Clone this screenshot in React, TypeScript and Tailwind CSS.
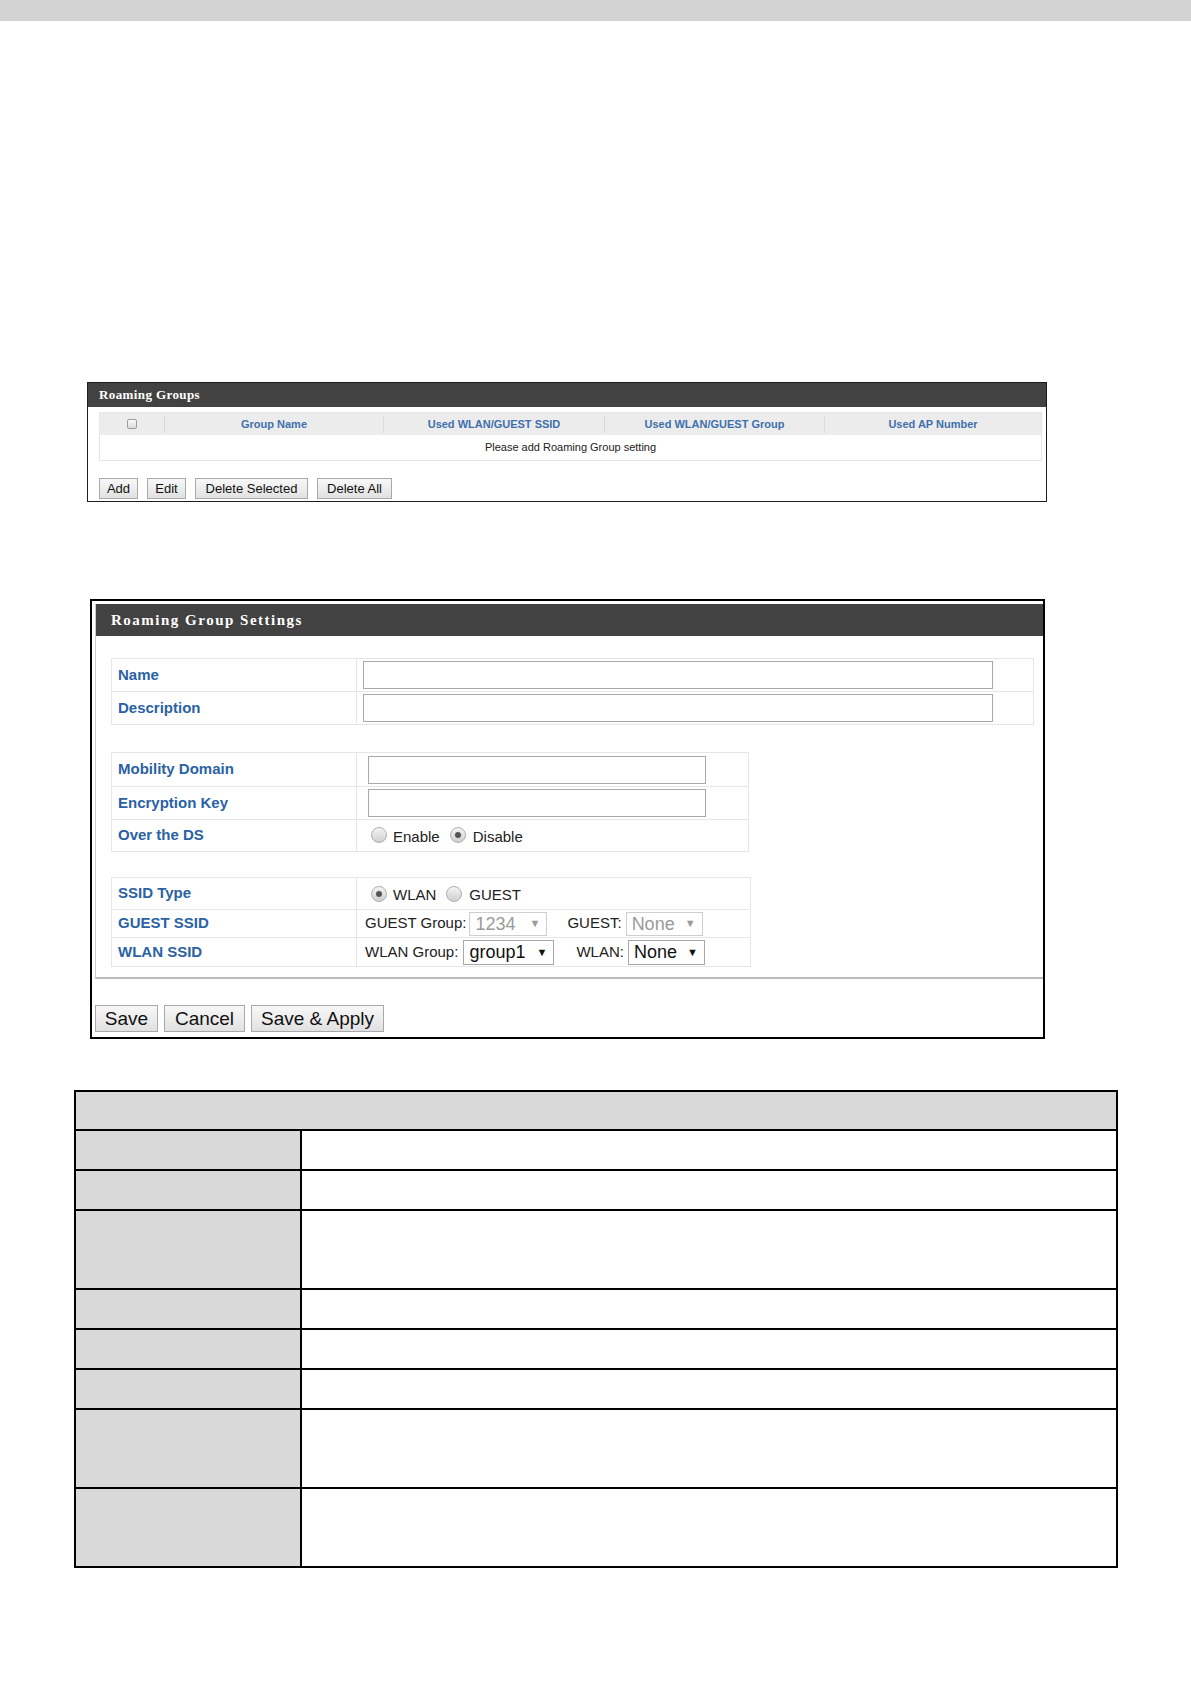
import React from "react";

const SANS = "font-['Liberation_Sans',Arial,sans-serif]";
const SERIF = "font-['Liberation_Serif','Times_New_Roman',serif]";

function GreyButton({ label, className = "" }: { label: string; className?: string }) {
  return (
    <button
      className={`${SANS} flex items-center justify-center border border-[#a9a9a9] bg-linear-to-b from-[#f8f8f8] to-[#e1e1e1] text-[#111] leading-none ${className}`}
    >
      {label}
    </button>
  );
}

function Radio({ checked = false }: { checked?: boolean }) {
  return (
    <span className="mb-[4px] flex h-[16px] w-[16px] shrink-0 items-center justify-center rounded-full border border-[#b0b0b0] bg-linear-to-b from-[#f4f4f4] to-[#cfcfcf]">
      {checked && <span className="h-[6px] w-[6px] rounded-full bg-[#555]" />}
    </span>
  );
}

function FakeSelect({ value, disabled = false, className = "" }: { value: string; disabled?: boolean; className?: string }) {
  return (
    <span
      className={`flex items-center justify-between border pl-[5px] pr-[6px] text-[18px] leading-none ${
        disabled ? "border-[#cfcfcf] text-[#9a9a9a]" : "border-[#a8a8a8] text-[#111]"
      } ${className}`}
    >
      <span>{value}</span>
      <span className="text-[11px]">▼</span>
    </span>
  );
}

function Label({ text }: { text: string }) {
  return (
    <div className="flex w-[245px] shrink-0 items-center border-r border-[#e6e6e6] pl-[6px] text-[15px] font-bold text-[#2a62a4]">
      {text}
    </div>
  );
}

export default function App() {
  return (
    <div className={`${SANS} min-h-[1684px] w-full bg-white`}>
      {/* viewer top strip */}
      <div className="h-[21px] w-full bg-[#d3d3d3]" />

      {/* Roaming Groups list */}
      <div className="ml-[87px] mt-[361px] h-[120px] w-[960px] border border-[#1c1c1c]">
        <div className={`${SERIF} flex h-[24px] items-center bg-[#424242] pl-[11px] text-[13px] font-bold tracking-[0.4px] text-white`}>
          Roaming Groups
        </div>
        <div className="ml-[11px] mr-[4px] mt-[5px] border border-[#e6e6e6]">
          <div className="grid h-[22px] grid-cols-[64px_219px_221px_220px_1fr] bg-[#ececec] text-[11px] font-bold text-[#3f70ad]">
            <div className="flex items-center justify-center">
              <span className="h-[10px] w-[10px] rounded-[2px] border border-[#9d9d9d] bg-linear-to-b from-[#fbfbfb] to-[#dcdcdc]" />
            </div>
            <div className="my-[3px] flex items-center justify-center border-l border-[#dadada]">Group Name</div>
            <div className="my-[3px] flex items-center justify-center border-l border-[#dadada]">Used WLAN/GUEST SSID</div>
            <div className="my-[3px] flex items-center justify-center border-l border-[#dadada]">Used WLAN/GUEST Group</div>
            <div className="my-[3px] flex items-center justify-center border-l border-[#dadada]">Used AP Number</div>
          </div>
          <div className="flex h-[25px] items-center justify-center text-[11px] text-[#222]">Please add Roaming Group setting</div>
        </div>
        <div className="ml-[11px] mt-[17px] flex gap-[9px] text-[13px]">
          <GreyButton label="Add" className="h-[21px] w-[39px]" />
          <GreyButton label="Edit" className="h-[21px] w-[39px]" />
          <GreyButton label="Delete Selected" className="h-[21px] w-[113px]" />
          <GreyButton label="Delete All" className="h-[21px] w-[75px]" />
        </div>
      </div>

      {/* Roaming Group Settings form */}
      <div className="ml-[90px] mt-[97px] h-[440px] w-[955px] border-2 border-black pl-[3px] pt-[3px]">
        <div className="h-[375px] border-b-2 border-l border-b-[#bcbcbc] border-l-[#cccccc]">
          <div className={`${SERIF} flex h-[32px] items-center bg-[#424242] pl-[15px] text-[15px] font-bold tracking-[1.5px] text-white`}>
            Roaming Group Settings
          </div>

          <div className="pl-[15px] pt-[22px]">
            {/* Name / Description */}
            <div className="w-[923px] border border-[#e6e6e6]">
              <div className="flex h-[33px] border-b border-[#e6e6e6]">
                <Label text="Name" />
                <div className="flex items-center pl-[6px]">
                  <input className="h-[28px] w-[630px] border border-[#a9a9a9] outline-none" />
                </div>
              </div>
              <div className="flex h-[32px]">
                <Label text="Description" />
                <div className="flex items-center pl-[6px]">
                  <input className="h-[28px] w-[630px] border border-[#a9a9a9] outline-none" />
                </div>
              </div>
            </div>

            {/* Mobility settings */}
            <div className="mt-[27px] w-[638px] border border-[#e6e6e6]">
              <div className="flex h-[34px] border-b border-[#e6e6e6]">
                <Label text="Mobility Domain" />
                <div className="flex items-center pl-[11px]">
                  <input className="h-[28px] w-[338px] border border-[#a9a9a9] outline-none" />
                </div>
              </div>
              <div className="flex h-[33px] border-b border-[#e6e6e6]">
                <Label text="Encryption Key" />
                <div className="flex items-center pl-[11px]">
                  <input className="h-[28px] w-[338px] border border-[#a9a9a9] outline-none" />
                </div>
              </div>
              <div className="flex h-[31px]">
                <Label text="Over the DS" />
                <div className="flex items-center pl-[14px] pt-[3px] text-[15px] text-[#222]">
                  <Radio />
                  <span className="ml-[6px]">Enable</span>
                  <span className="ml-[10px]">
                    <Radio checked />
                  </span>
                  <span className="ml-[7px]">Disable</span>
                </div>
              </div>
            </div>

            {/* SSID settings */}
            <div className="mt-[25px] w-[640px] border border-[#e6e6e6]">
              <div className="flex h-[32px] border-b border-[#e6e6e6]">
                <Label text="SSID Type" />
                <div className="flex items-center pl-[14px] pt-[4px] text-[15px] text-[#222]">
                  <Radio checked />
                  <span className="ml-[6px]">WLAN</span>
                  <span className="ml-[10px]">
                    <Radio />
                  </span>
                  <span className="ml-[7px]">GUEST</span>
                </div>
              </div>
              <div className="flex h-[28px] border-b border-[#e6e6e6]">
                <Label text="GUEST SSID" />
                <div className="flex items-center pl-[8px] text-[15px] text-[#222]">
                  <span>GUEST Group:</span>
                  <FakeSelect value="1234" disabled className="ml-[3px] h-[24px] w-[78px]" />
                  <span className="ml-[20px]">GUEST:</span>
                  <FakeSelect value="None" disabled className="ml-[4px] h-[24px] w-[77px]" />
                </div>
              </div>
              <div className="flex h-[28px]">
                <Label text="WLAN SSID" />
                <div className="flex items-center pl-[8px] text-[15px] text-[#222]">
                  <span>WLAN Group:</span>
                  <FakeSelect value="group1" className="ml-[5px] h-[25px] w-[91px]" />
                  <span className="ml-[22px]">WLAN:</span>
                  <FakeSelect value="None" className="ml-[4px] h-[25px] w-[77px]" />
                </div>
              </div>
            </div>
          </div>
        </div>

        <div className="mt-[26px] flex gap-[6px] text-[19px]">
          <GreyButton label="Save" className="h-[27px] w-[63px]" />
          <GreyButton label="Cancel" className="h-[27px] w-[81px]" />
          <GreyButton label="Save & Apply" className="h-[27px] w-[133px]" />
        </div>
      </div>

      {/* description table (empty) */}
      <div className="ml-[74px] mt-[51px] w-[1044px] border-2 border-black">
        <div className="h-[37px] bg-[#d9d9d9]" />
        {[40, 40, 79, 40, 40, 40, 79, 79].map((h, i) => (
          <div key={i} className="flex border-t-2 border-black" style={{ height: h }}>
            <div className="w-[226px] border-r-2 border-black bg-[#d9d9d9]" />
            <div className="flex-1 bg-white" />
          </div>
        ))}
      </div>
    </div>
  );
}
